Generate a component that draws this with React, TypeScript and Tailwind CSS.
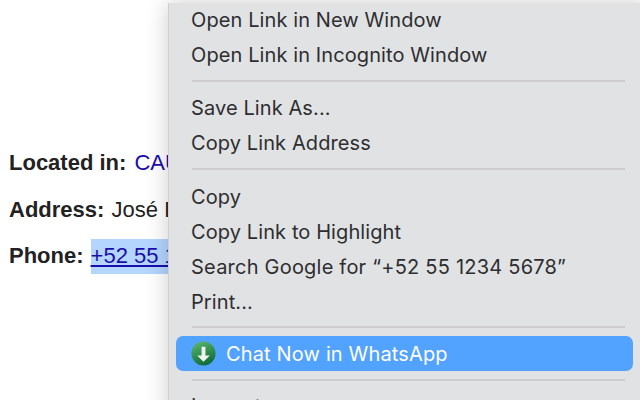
import React from "react";

function Item({ children }: { children: React.ReactNode }) {
  return <div className="h-[35px] pl-[22px] leading-[35px] whitespace-nowrap">{children}</div>;
}

export default function App() {
  return (
    <div className="relative w-[640px] h-[400px] overflow-hidden bg-white">
      <div className="flex flex-col gap-[20.5px] pl-[9px] pt-[150px] text-[22px] leading-[26px] text-[#222222] font-['Liberation_Sans',sans-serif] whitespace-nowrap">
        <div>
          <b>Located in:</b> <span className="ml-[2px] text-[#1a0dab]">CAU</span>
        </div>
        <div>
          <b>Address:</b> <span className="ml-[1px]">José I</span>
        </div>
        <div className="flex items-center h-[26px]">
          <b>Phone:</b>
          <span className="ml-[7px] h-[35px] leading-[33px] bg-[#b4d5fe] text-[#1a0dab] underline">+52 55 1234 5678</span>
        </div>
      </div>

      <div className="absolute left-[168px] top-[3px] w-[480px] h-[420px] bg-[#e1e2e4] border-l border-[#cfcfd1] shadow-[0_0_22px_rgba(0,0,0,0.2)] text-[20px] text-[#2e2e30] font-['Inter',sans-serif] tracking-[0.1px]">
        <Item>Open Link in New Window</Item>
        <Item>Open Link in Incognito Window</Item>
        <div className="mx-[23px] mt-[7px] mb-[8.5px] h-[2px] bg-[#cdcdcf]" />
        <Item>Save Link As...</Item>
        <Item>Copy Link Address</Item>
        <div className="mx-[23px] mt-[7px] mb-[10px] h-[2px] bg-[#cdcdcf]" />
        <Item>Copy</Item>
        <Item>Copy Link to Highlight</Item>
        <Item>
          <span className="tracking-[0.22px]">Search Google for “+52 55 1234 5678”</span>
        </Item>
        <Item>Print...</Item>
        <div className="mx-[23px] mt-[6px] mb-[8px] h-[2px] bg-[#cdcdcf]" />
        <div className="ml-[7px] mr-[15px] h-[35px] flex items-center gap-[10px] pl-[15px] pt-[1px] rounded-[7px] bg-[#52a2ff] text-white tracking-[0.15px]">
          <svg width="25" height="25" viewBox="0 0 26 26">
            <defs>
              <linearGradient id="g" x1="0.2" y1="0" x2="0.6" y2="1">
                <stop offset="0" stopColor="#5bb56d" />
                <stop offset="1" stopColor="#0c6a35" />
              </linearGradient>
            </defs>
            <circle cx="13" cy="13" r="12.5" fill="url(#g)" />
            <path d="M11 6h4v9h4.500L13 21.500 6.500 15H11z" fill="#f2f5ef" />
          </svg>
          <span>Chat Now in WhatsApp</span>
        </div>
        <div className="mx-[23px] mt-[8px] mb-[8.5px] h-[2px] bg-[#cdcdcf]" />
        <Item>Inspect</Item>
      </div>
    </div>
  );
}
